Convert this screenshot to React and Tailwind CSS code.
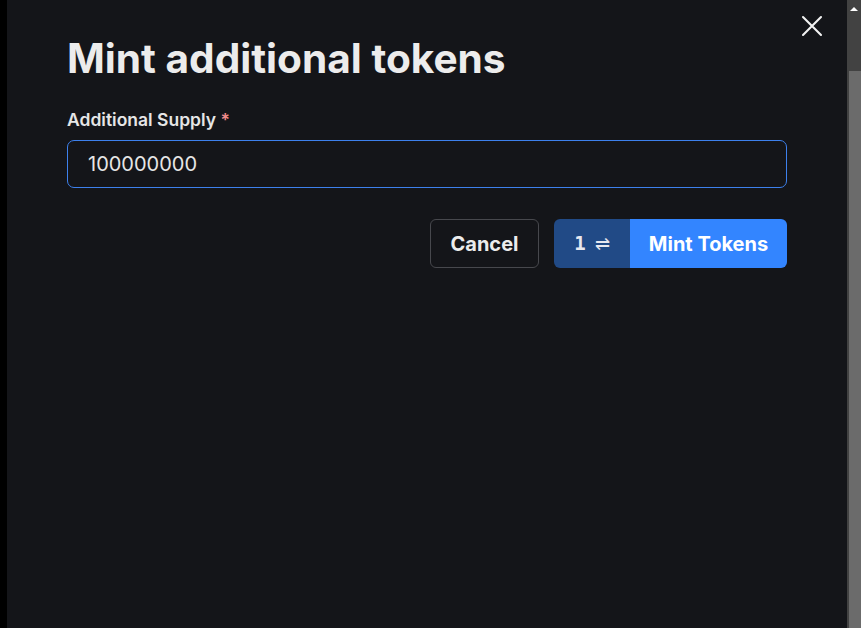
import React, { useState } from 'react';

const CloseIcon = () => (
    <svg className="w-[24px] h-[24px]" fill="none" stroke="currentColor" viewBox="0 0 24 24"><path strokeLinecap="round" strokeWidth={2.1} d="M3 3l18 18M21 3L3 21" /></svg>
);

export default function App() {
    const [supply, setSupply] = useState('100000000');

    return (
        <div className="h-[628px] w-full flex bg-black overflow-hidden" style={{ fontFamily: 'Inter, "Liberation Sans", sans-serif' }}>
            <div className="w-[7px] flex-shrink-0" />

            <div className="relative flex-1 bg-[#141519] px-[60px] pt-[34px]">
                <button className="absolute top-[14px] right-[23px] text-[#f2f2f2]">
                    <CloseIcon />
                </button>

                <h2 className="text-[40.6px] leading-[50px] font-bold text-[#ececec]">Mint additional tokens</h2>

                <label className="block mt-[24px] text-[17.5px] leading-6 font-semibold text-[#e6e6e6]">
                    Additional Supply <span className="text-[#f08a8a]">*</span>
                </label>

                <input
                    type="text"
                    value={supply}
                    onChange={(e) => setSupply(e.target.value)}
                    className="mt-[8px] w-full h-[48px] bg-transparent border border-[#3d80ec] rounded-[7px] px-5 text-[20px] text-[#e6e6e6] focus:outline-none"
                />

                <div className="mt-[31px] flex justify-end gap-[15px]">
                    <button className="h-[49px] w-[109px] rounded-md border border-[#47484d] text-[20px] font-bold text-[#ececec]">
                        Cancel
                    </button>
                    <div className="h-[49px] flex rounded-md overflow-hidden">
                        <div className="w-[76px] bg-[#214a86] flex items-center justify-center gap-[9px] text-[#e8e8f0]">
                            <span className="text-[19px] font-bold leading-none" style={{ fontFamily: '"DejaVu Sans Mono", monospace' }}>1</span>
                            <span className="text-[18px] leading-none">⇌</span>
                        </div>
                        <button className="w-[157px] bg-[#3385ff] text-[20px] font-bold text-white">
                            Mint Tokens
                        </button>
                    </div>
                </div>
            </div>

            <div className="w-[14px] flex-shrink-0 flex flex-col bg-[#424242]">
                <div className="h-[17px] flex items-center justify-center">
                    <div className="w-0 h-0 border-l-[4px] border-r-[4px] border-b-[4px] border-l-transparent border-r-transparent border-b-white" />
                </div>
                <div className="mt-[54px] ml-[2px] flex-1 bg-[#6b6b6b]" />
            </div>
        </div>
    );
}
